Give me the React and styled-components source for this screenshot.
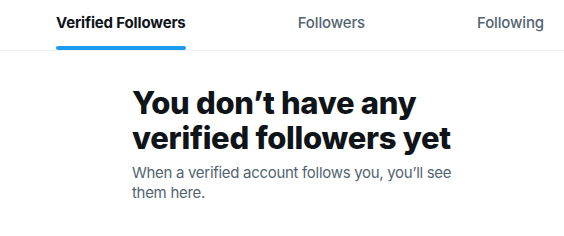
import React, { useState } from "react";
import styled, { createGlobalStyle } from "styled-components";

const GlobalStyle = createGlobalStyle`
  html, body {
    margin: 0;
    padding: 0;
    background: #ffffff;
    overflow: hidden;
  }
  body {
    font-family: Inter, "Noto Sans", "Liberation Sans", sans-serif;
    -webkit-font-smoothing: antialiased;
  }
`;

const tabs = ["Verified Followers", "Followers", "Following"];

const App = () => {
  const [active, setActive] = useState(0);

  return (
    <>
      <GlobalStyle />
      <Column>
        <TabBar>
          {tabs.map((label, i) => (
            <Tab key={label} onClick={() => setActive(i)}>
              <TabLabel $active={i === active}>
                {label}
                {i === active && <Underline />}
              </TabLabel>
            </Tab>
          ))}
        </TabBar>
        <Empty>
          <Heading>You don’t have any verified followers yet</Heading>
          <Sub>When a verified account follows you, you’ll see them here.</Sub>
        </Empty>
      </Column>
    </>
  );
};

const Column = styled.main`
  width: 600px;
`;

const TabBar = styled.nav`
  display: flex;
  border-bottom: 1px solid #eff3f4;
`;

const Tab = styled.div`
  flex: 1 1 auto;
  display: flex;
  justify-content: center;
  padding: 0 16px;
  height: 50px;
  cursor: pointer;
`;

const TabLabel = styled.div`
  position: relative;
  display: flex;
  align-items: center;
  padding-bottom: 4px;
  font-size: 15px;
  line-height: 20px;
  font-weight: ${(p) => (p.$active ? 700 : 500)};
  color: ${(p) => (p.$active ? "#0f1419" : "#536471")};
  letter-spacing: -0.15px;
  white-space: nowrap;
`;

const Underline = styled.span`
  position: absolute;
  left: 0;
  right: 0;
  bottom: 0;
  height: 4px;
  border-radius: 9999px;
  background: #1d9bf0;
`;

const Empty = styled.section`
  max-width: 336px;
  margin: 34px auto 32px;
  padding: 0 32px;
`;

const Heading = styled.h1`
  margin: 0 0 8px;
  font-size: 31px;
  line-height: 35px;
  font-weight: 800;
  color: #0f1419;
  letter-spacing: -0.3px;
`;

const Sub = styled.p`
  margin: 0;
  font-size: 15px;
  line-height: 20px;
  font-weight: 400;
  color: #536471;
  letter-spacing: -0.3px;
`;

export default App;
